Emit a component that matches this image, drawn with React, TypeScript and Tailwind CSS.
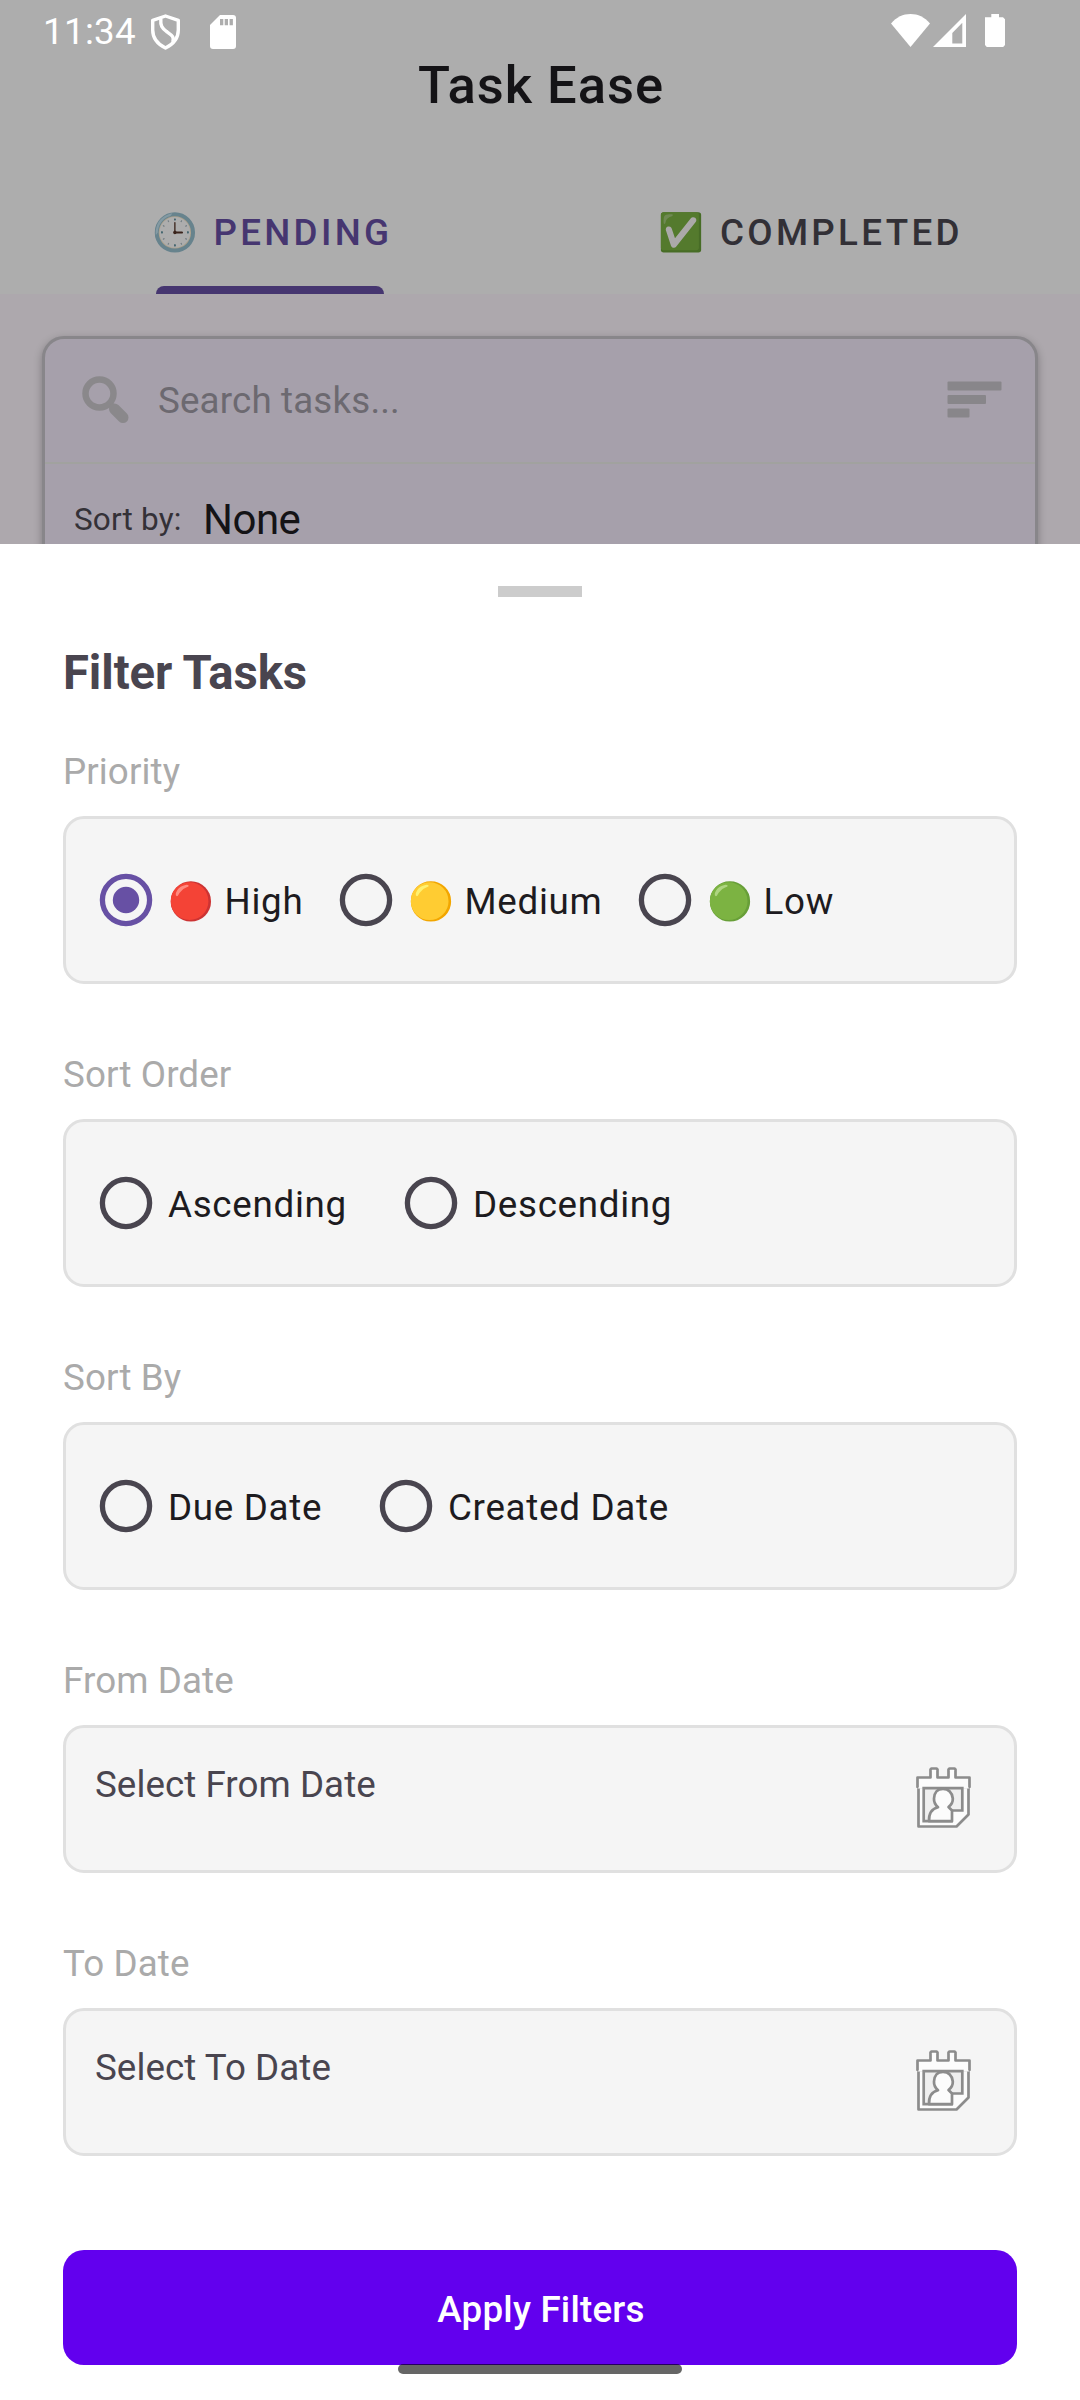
import type { ReactNode } from 'react';

function StatusBar() {
  return (
    <div className="flex h-[55px] items-start pt-[10px] pl-[43px] text-white">
      <span className="w-[107px] text-[36.75px] leading-[44px] tracking-[0.3px]">11:34</span>
      <svg className="mt-[4px] h-[36px] w-[31px]" viewBox="0 0 31 36" fill="none" stroke="currentColor" strokeWidth="3.4" strokeLinejoin="round">
        <path d="M15.5 2 28.3 6.4V16c0 8.300-5.200 14.300-12.800 18C7.900 30.300 2.700 24.300 2.700 16V6.400Z" />
        <path d="M10.800 4.500C10.300 12 12 14 16.500 17.500C21.500 21 24.500 22.500 22.800 28" />
      </svg>
      <svg className="mt-[5px] ml-[29px] h-[34px] w-[26px]" viewBox="0 0 26 34">
        <path fill="currentColor" d="M10 0h13a3 3 0 0 1 3 3v28a3 3 0 0 1-3 3H3a3 3 0 0 1-3-3V10Z" />
        <path fill="#adadad" d="M10 4h3.300v6.300H10ZM14.700 4H18v6.300h-3.300ZM19.600 4h3.300v6.300h-3.300Z" />
      </svg>
      <svg className="mt-[4px] ml-[655px] h-[33px] w-[39px]" viewBox="0 0 39 33">
        <path fill="currentColor" d="M19.500 33 0 9.500C5.500 3 12 0 19.500 0S33.500 3 39 9.500Z" />
      </svg>
      <svg className="mt-[4px] ml-[3px] h-[33px] w-[33px]" viewBox="0 0 33 33">
        <path fill="currentColor" fillRule="evenodd" d="M33 0v33H0ZM29.300 8.800 19.300 19V29.600h10Z" />
      </svg>
      <svg className="mt-[4px] ml-[19px] h-[33px] w-[20px]" viewBox="0 0 20 33">
        <path fill="currentColor" d="M6.300 0h7.700v3.300h4l2 2V31l-1.800 2H1.800L0 31V3.300h6.300Z" />
      </svg>
    </div>
  );
}

function Tab({ emoji, label, active }: { emoji: string; label: string; active?: boolean }) {
  return (
    <div className="flex flex-1 flex-col items-center">
      <div className={`flex h-[118px] items-center pt-[11px] text-[36.75px] leading-[44px] font-medium tracking-[3.31px] ${active ? 'pl-[4px] text-[#463670]' : 'pl-[1px] text-[#323036]'}`}>
        <span className="brightness-[.68]">{emoji}</span>
        <span className="whitespace-pre"> {label}</span>
      </div>
      {active && <div className="h-[8px] w-[228px] rounded-t-[8px] bg-[#463670]" />}
    </div>
  );
}

function SearchCard() {
  return (
    <div className="h-[300px] rounded-[22px] border-[3px] border-[#88868a] bg-[#a6a0ab] shadow-[0_3px_8px_rgba(0,0,0,0.28)]">
      <div className="flex h-[123px] items-center pl-[37px]">
        <svg className="mb-[2px] h-[48px] w-[48px] shrink-0" viewBox="0 0 48 48" fill="none" stroke="#8a888b">
          <circle cx="17.500" cy="17.500" r="14" strokeWidth="6.500" />
          <path d="M28.500 28.500 31 31" strokeWidth="6" />
          <path d="m32.500 33 8.500 8.500" strokeWidth="11" strokeLinecap="round" />
        </svg>
        <span className="ml-[28px] flex-1 text-[36.75px] leading-[44px] tracking-[0.15px] text-[#6c6970]">Search tasks...</span>
        <svg className="mr-[33px] mb-[3px] h-[37px] w-[55px]" viewBox="0 0 55 37" fill="#88868a">
          <rect x=".5" y=".5" width="54" height="9" rx="1" />
          <rect x=".5" y="14" width="38.500" height="9" rx="1" />
          <rect x=".5" y="27.500" width="22" height="9" rx="1" />
        </svg>
      </div>
      <div className="h-[2px] bg-[#a1a29f]" />
      <div className="flex items-start pl-[29px]">
        <span className="mt-[36px] w-[129px] text-[31.5px] leading-[40px] tracking-[0.15px] text-[#343137]">Sort by:</span>
        <span className="mt-[33px] text-[42px] leading-[46px] tracking-[-0.5px] text-[#141316]">None</span>
      </div>
    </div>
  );
}

function Radio({ label, width, checked }: { label: string; width: string; checked?: boolean }) {
  return (
    <div className={`flex items-center ${width}`}>
      <svg className="mx-[15px] h-[54px] w-[54px] shrink-0" viewBox="0 0 54 54">
        <circle cx="27" cy="27" r="23.600" fill="none" stroke={checked ? '#6750a4' : '#49454f'} strokeWidth="5.300" />
        {checked && <circle cx="27" cy="27" r="13.200" fill="#6750a4" />}
      </svg>
      <span className="pt-[3px] text-[36.75px] leading-[44px] tracking-[0.7px] whitespace-nowrap text-[#1d1b20]">{label}</span>
    </div>
  );
}

function Field({ label, children }: { label: string; children: ReactNode }) {
  return (
    <section className="mb-[65px]">
      <div className="mb-[19px] pt-px text-[36.75px] leading-[50px] tracking-[0.1px] text-[#aaaaaa]">{label}</div>
      {children}
    </section>
  );
}

function RadioBox({ children }: { children: ReactNode }) {
  return <div className="flex h-[168px] items-center rounded-[21px] border-[3px] border-[#e0e0e0] bg-[#f5f5f5] pl-[18px]">{children}</div>;
}

function CalendarIcon() {
  return (
    <svg className="mt-[27px] mr-[30px] h-[84px] w-[84px]" viewBox="0 0 84 84" stroke="#8c8c8c" strokeWidth="2.700" strokeLinejoin="round">
      <path fill="#fcfcfc" d="M18.500 32V71.500H56.500L68.500 59.500V32Z" />
      <path fill="#fcfcfc" stroke="none" d="M17.500 22.500h52v11h-52Z" />
      <path fill="#fcfcfc" d="M18.500 32H17.500V22.500H30.500V14.500L31.500 13.500H36.500L37.500 14.500V22.500H48.500V14.500L49.500 13.500H54.500L55.500 14.500V22.500H69.500V32H68.500" />
      <path fill="#efefef" strokeLinejoin="miter" d="M23.700 33.200H62.300V55.500H51.500V66.200H23.700Z" />
      <path fill="#fcfcfc" d="M29 66.200C28.700 57.500 32 53.800 38 52.300C35.500 50 33.800 47 34 43.500C34.200 37.500 37.500 33.800 43 33.800S52 37.500 52.800 43.500C53 47 51 50 48.500 52L52 55.500V66.200Z" />
    </svg>
  );
}

function DateBox({ text }: { text: string }) {
  return (
    <div className="flex h-[148px] items-start justify-between rounded-[21px] border-[3px] border-[#e0e0e0] bg-[#f5f5f5] pl-[29px]">
      <span className="pt-[35px] text-[36.75px] leading-[44px] tracking-[0.05px] text-[#49454f]">{text}</span>
      <CalendarIcon />
    </div>
  );
}

export default function App() {
  return (
    <div className="relative h-[2400px] w-[1080px] overflow-hidden bg-white font-[Roboto,sans-serif]">
      <header className="h-[294px] bg-[#adadad]">
        <StatusBar />
        <h1 className="-mt-px pl-[2px] text-center text-[52.5px] leading-[62px] font-medium tracking-[0.95px] text-[#141316]">Task Ease</h1>
        <nav className="mt-[52px] flex h-[126px]">
          <Tab emoji="🕒" label="PENDING" active />
          <Tab emoji="✅" label="COMPLETED" />
        </nav>
      </header>
      <div className="h-[250px] overflow-hidden bg-[#ada8ad] px-[42px] pt-[42px]">
        <SearchCard />
      </div>

      <main className="bg-white px-[63px] pt-[42px]">
        <div className="mx-auto h-[11px] w-[84px] bg-[#cccccc]" />
        <h2 className="mt-[48px] mb-[45px] text-[47.25px] leading-[56px] font-bold tracking-[-0.1px] text-[#49454f]">Filter Tasks</h2>
        <Field label="Priority">
          <RadioBox>
            <Radio label="🔴 High" width="w-[240px]" checked />
            <Radio label="🟡 Medium" width="w-[299px]" />
            <Radio label="🟢 Low" width="w-[240px]" />
          </RadioBox>
        </Field>
        <Field label="Sort Order">
          <RadioBox>
            <Radio label="Ascending" width="w-[305px]" />
            <Radio label="Descending" width="w-[305px]" />
          </RadioBox>
        </Field>
        <Field label="Sort By">
          <RadioBox>
            <Radio label="Due Date" width="w-[280px]" />
            <Radio label="Created Date" width="w-[310px]" />
          </RadioBox>
        </Field>
        <Field label="From Date">
          <DateBox text="Select From Date" />
        </Field>
        <Field label="To Date">
          <DateBox text="Select To Date" />
        </Field>
        <div className="pt-[29px]">
          <button className="flex h-[115px] w-full items-center justify-center rounded-[21px] bg-[#6200ee] pt-[5px] pl-[2px] text-[36.75px] leading-[44px] font-medium tracking-[0.2px] text-white">
            Apply Filters
          </button>
        </div>
      </main>
      <div className="absolute bottom-[26px] left-[398px] h-[10px] w-[284px] rounded-full bg-black/60" />
    </div>
  );
}
